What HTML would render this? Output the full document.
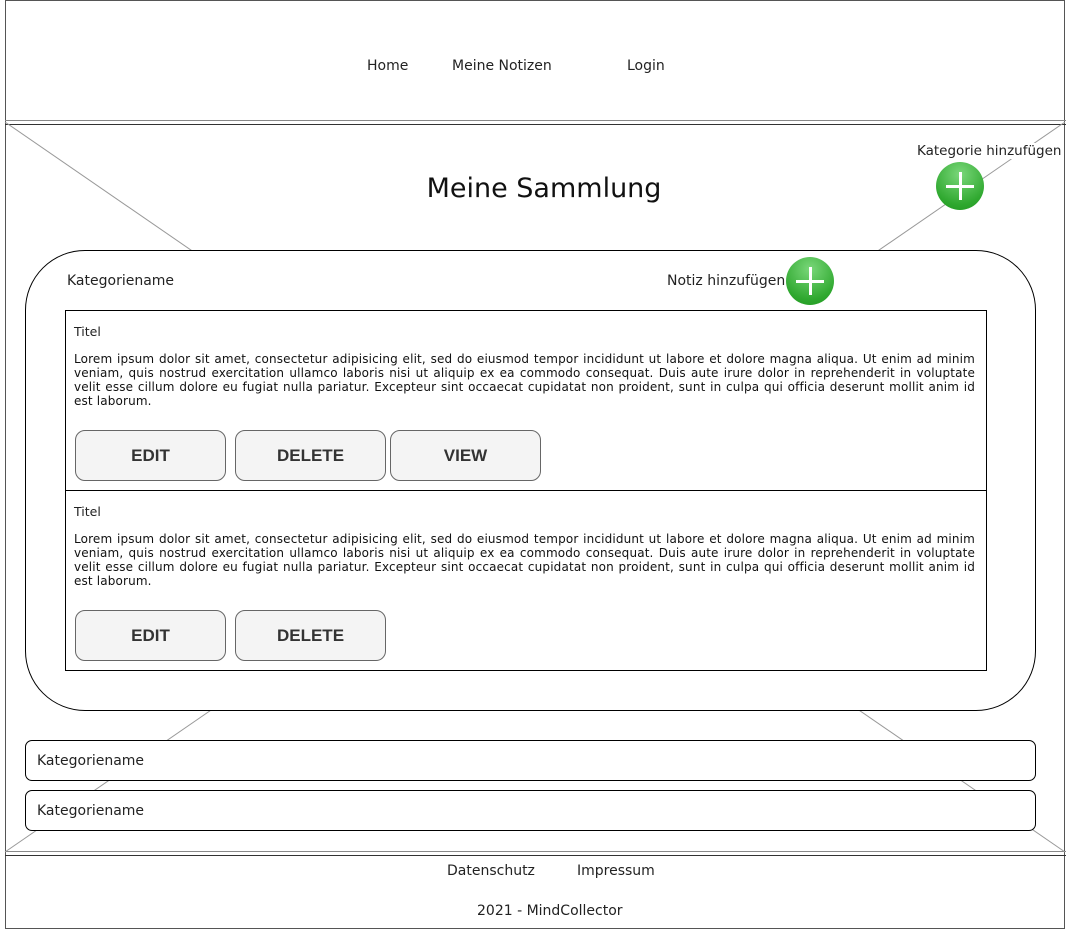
<!DOCTYPE html>
<html><head><meta charset="utf-8"><style>
body{margin:0;width:1067px;height:931px;position:relative;background:#fff;font-family:"DejaVu Sans","Liberation Sans",sans-serif;color:#222;overflow:hidden}
.a{position:absolute}
.box{position:absolute;background:#fff;border:1px solid #000}
.btn{position:absolute;border:1px solid #666;border-radius:10px;background:#f4f4f4;font:bold 17px "Liberation Sans",sans-serif;color:#333;text-align:center;box-sizing:border-box}
.p{position:absolute;left:74px;width:901px;font-size:12px;letter-spacing:0.15px;line-height:14px;text-align:justify;color:#111}
.t{font-size:12.5px}
.n{font-size:14px}
.plus{position:absolute;width:48px;height:48px;border-radius:50%;background:radial-gradient(circle at 50% 25%,#7ad77a,#2fa82f 70%,#1f961f)}
.plus:before{content:"";position:absolute;left:10px;top:22.5px;width:28px;height:3px;background:#fff}
.plus:after{content:"";position:absolute;left:22.5px;top:10px;width:3px;height:28px;background:#fff}
</style></head><body>
<div class="a" style="left:5px;top:0;width:1060px;height:929px;border:1px solid #555;box-sizing:border-box"></div>
<div class="a" style="left:5px;top:120px;width:1061px;height:1px;background:#888"></div>
<div class="a" style="left:5px;top:124px;width:1061px;height:1px;background:#333"></div>
<div class="a" style="left:5px;top:851px;width:1061px;height:1px;background:#888"></div>
<div class="a" style="left:5px;top:855px;width:1061px;height:1px;background:#333"></div>
<svg class="a" style="left:0;top:0" width="1067" height="931"><line x1="5" y1="122" x2="1065" y2="852" stroke="#999"/><line x1="1065" y1="122" x2="5" y2="852" stroke="#999"/></svg>
<div class="a n" style="left:367px;top:58px">Home</div>
<div class="a n" style="left:452px;top:58px">Meine Notizen</div>
<div class="a n" style="left:627px;top:58px">Login</div>
<div class="a" style="left:0;width:1088px;top:173px;text-align:center;font-size:27px;color:#111">Meine Sammlung</div>
<div class="a" style="left:917px;top:143px;font-size:13.5px;background:#fff;white-space:nowrap">Kategorie hinzufügen</div>
<div class="plus" style="left:936px;top:162px"></div>
<div class="box" style="left:25px;top:250px;width:1009px;height:459px;border-radius:60px"></div>
<div class="a n" style="left:67px;top:273px">Kategoriename</div>
<div class="a n" style="left:667px;top:273px">Notiz hinzufügen</div>
<div class="plus" style="left:786px;top:257px"></div>
<div class="box" style="left:65px;top:310px;width:920px;height:359px"></div>
<div class="a" style="left:65px;top:490px;width:921px;height:1px;background:#000"></div>
<div class="a t" style="left:74px;top:324px">Titel</div>
<div class="p" style="top:352px">Lorem ipsum dolor sit amet, consectetur adipisicing elit, sed do eiusmod tempor incididunt ut labore et dolore magna aliqua. Ut enim ad minim veniam, quis nostrud exercitation ullamco laboris nisi ut aliquip ex ea commodo consequat. Duis aute irure dolor in reprehenderit in voluptate velit esse cillum dolore eu fugiat nulla pariatur. Excepteur sint occaecat cupidatat non proident, sunt in culpa qui officia deserunt mollit anim id est laborum.</div>
<div class="btn" style="left:75px;top:430px;width:151px;height:51px;line-height:49px">EDIT</div>
<div class="btn" style="left:235px;top:430px;width:151px;height:51px;line-height:49px">DELETE</div>
<div class="btn" style="left:390px;top:430px;width:151px;height:51px;line-height:49px">VIEW</div>
<div class="a t" style="left:74px;top:504px">Titel</div>
<div class="p" style="top:532px">Lorem ipsum dolor sit amet, consectetur adipisicing elit, sed do eiusmod tempor incididunt ut labore et dolore magna aliqua. Ut enim ad minim veniam, quis nostrud exercitation ullamco laboris nisi ut aliquip ex ea commodo consequat. Duis aute irure dolor in reprehenderit in voluptate velit esse cillum dolore eu fugiat nulla pariatur. Excepteur sint occaecat cupidatat non proident, sunt in culpa qui officia deserunt mollit anim id est laborum.</div>
<div class="btn" style="left:75px;top:610px;width:151px;height:51px;line-height:49px">EDIT</div>
<div class="btn" style="left:235px;top:610px;width:151px;height:51px;line-height:49px">DELETE</div>
<div class="box" style="left:25px;top:740px;width:1009px;height:39px;border-radius:7px"></div>
<div class="a n" style="left:37px;top:753px">Kategoriename</div>
<div class="box" style="left:25px;top:790px;width:1009px;height:39px;border-radius:7px"></div>
<div class="a n" style="left:37px;top:803px">Kategoriename</div>
<div class="a n" style="left:447px;top:863px">Datenschutz</div>
<div class="a n" style="left:577px;top:863px">Impressum</div>
<div class="a n" style="left:477px;top:903px">2021 - MindCollector</div>
</body></html>
